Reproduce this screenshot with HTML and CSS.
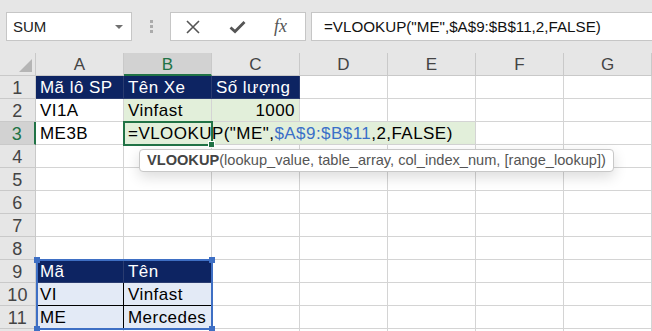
FILE: index.html
```html
<!DOCTYPE html>
<html lang="vi">
<head>
    <meta charset="UTF-8">
    <meta name="viewport" content="width=device-width, initial-scale=1.0">
    <title>VLOOKUP</title>
    <link rel="stylesheet" href="styles.css">
</head>
<body>
    <div class="app">
        <div class="toolbar">
            <div class="namebox"><span>SUM</span><span class="caret"></span></div>
            <div class="grip"><i></i><i></i><i></i></div>
            <div class="fxbox">
                <svg class="ico" width="14" height="14" viewBox="0 0 14 14"><path d="M1 1 L13 13 M13 1 L1 13" stroke="#555" stroke-width="1.6" fill="none"/></svg>
                <svg class="ico" width="17" height="14" viewBox="0 0 17 14"><path d="M1.5 7.5 L6 11.5 L15.5 2" stroke="#555" stroke-width="2.8" fill="none"/></svg>
                <span class="fx">fx</span>
            </div>
            <div class="formula">=VLOOKUP("ME",$A$9:$B$11,2,FALSE)</div>
        </div>

        <div class="sheet">
            <!-- column headers -->
            <div class="c h corner"><span class="tri"></span></div>
            <div class="c h">A</div>
            <div class="c h col-sel">B</div>
            <div class="c h">C</div>
            <div class="c h">D</div>
            <div class="c h">E</div>
            <div class="c h">F</div>
            <div class="c h">G</div>

            <!-- 1 -->
            <div class="c h rn">1</div>
            <div class="c navy">Mã lô SP</div>
            <div class="c navy">Tên Xe</div>
            <div class="c navy">Số lượng</div>
            <div class="c"></div><div class="c"></div><div class="c"></div><div class="c"></div>

            <!-- 2 -->
            <div class="c h rn">2</div>
            <div class="c">VI1A</div>
            <div class="c green">Vinfast</div>
            <div class="c green num">1000</div>
            <div class="c"></div><div class="c"></div><div class="c"></div><div class="c"></div>

            <!-- 3 -->
            <div class="c h rn row-sel">3</div>
            <div class="c">ME3B</div>
            <div class="c green editing">=VLOOKUP("ME",<span class="ref">$A$9:$B$11</span>,2,FALSE)</div>
            <div class="c"></div><div class="c"></div>

            <!-- 4 - 8 -->
            <div class="c h rn">4</div>
            <div class="c"></div><div class="c"></div><div class="c"></div><div class="c"></div><div class="c"></div><div class="c"></div><div class="c"></div>
            <div class="c h rn">5</div>
            <div class="c"></div><div class="c"></div><div class="c"></div><div class="c"></div><div class="c"></div><div class="c"></div><div class="c"></div>
            <div class="c h rn">6</div>
            <div class="c"></div><div class="c"></div><div class="c"></div><div class="c"></div><div class="c"></div><div class="c"></div><div class="c"></div>
            <div class="c h rn">7</div>
            <div class="c"></div><div class="c"></div><div class="c"></div><div class="c"></div><div class="c"></div><div class="c"></div><div class="c"></div>
            <div class="c h rn">8</div>
            <div class="c"></div><div class="c"></div><div class="c"></div><div class="c"></div><div class="c"></div><div class="c"></div><div class="c"></div>

            <!-- 9 - 11 lookup table -->
            <div class="c h rn">9</div>
            <div class="c navy">Mã</div>
            <div class="c navy">Tên</div>
            <div class="c"></div><div class="c"></div><div class="c"></div><div class="c"></div><div class="c"></div>
            <div class="c h rn">10</div>
            <div class="c blue line-r line-b">VI</div>
            <div class="c blue line-b">Vinfast</div>
            <div class="c"></div><div class="c"></div><div class="c"></div><div class="c"></div><div class="c"></div>
            <div class="c h rn">11</div>
            <div class="c blue line-r">ME</div>
            <div class="c blue">Mercedes</div>
            <div class="c"></div><div class="c"></div><div class="c"></div><div class="c"></div><div class="c"></div>

            <!-- 12 (only its top edge is in view) -->
            <div class="c h"></div>
            <div class="c"></div><div class="c"></div><div class="c"></div><div class="c"></div><div class="c"></div><div class="c"></div><div class="c"></div>

            <!-- selection overlays -->
            <div class="active"></div>
            <div class="range"><i class="tl"></i><i class="tr"></i><i class="bl"></i><i class="br"></i></div>
        </div>

        <div class="tip"><b>VLOOKUP</b>(lookup_value, table_array, col_index_num, [range_lookup])</div>
    </div>
</body>
</html>
```

FILE: styles.css
```css
body {
    margin: 0;
    font-family: "Liberation Sans", Arial, sans-serif;
    background-color: #fff;
}
.app {
    position: relative;
    width: 652px;
    height: 331px;
    overflow: hidden;
}

/* formula bar */
.toolbar {
    display: flex;
    align-items: flex-start;
    height: 53px;
    box-sizing: border-box;
    padding: 12px 0 0 6px;
    background-color: #e6e6e6;
}
.namebox {
    width: 126px;
    height: 29px;
    box-sizing: border-box;
    display: flex;
    align-items: center;
    justify-content: space-between;
    padding: 0 8px 0 6px;
    border: 1px solid #c6c6c6;
    background-color: #fff;
    font-size: 15px;
    color: #222;
}
.caret {
    border-left: 4px solid transparent;
    border-right: 4px solid transparent;
    border-top: 4px solid #707070;
}
.grip {
    display: flex;
    flex-direction: column;
    gap: 2px;
    margin: 8px 17px 0 18px;
}
.grip i {
    width: 3px;
    height: 3px;
    background-color: #ababab;
}
.fxbox {
    width: 136px;
    height: 29px;
    box-sizing: border-box;
    display: flex;
    align-items: center;
    padding-left: 15px;
    border: 1px solid #c6c6c6;
    background-color: #fff;
}
.fxbox .ico + .ico {
    margin-left: 29px;
}
.fx {
    margin-left: 28px;
    font-family: "Liberation Serif", "Times New Roman", serif;
    font-style: italic;
    font-size: 18px;
    color: #555;
}
.formula {
    flex: 1;
    height: 29px;
    box-sizing: border-box;
    margin-left: 5px;
    padding-left: 12px;
    border: 1px solid #c6c6c6;
    border-right: none;
    background-color: #fff;
    font-size: 15.2px;
    line-height: 27px;
    color: #111;
    white-space: nowrap;
}

/* sheet grid */
.sheet {
    position: relative;
    display: grid;
    grid-template-columns: 36px repeat(7, 88px);
    grid-auto-rows: 23px;
}
.c {
    box-sizing: border-box;
    padding: 2px 4px 0 4px;
    border-right: 1px solid #d4d4d4;
    border-bottom: 1px solid #d4d4d4;
    font-size: 17px;
    letter-spacing: 0.45px;
    line-height: 20px;
    color: #000;
    white-space: nowrap;
    overflow: hidden;
}
.h {
    padding: 2px 0 0 0;
    background-color: #e6e6e6;
    border-color: #c9c9c9;
    text-align: center;
    font-size: 17px;
    letter-spacing: 0;
    color: #444;
}
.rn {
    font-size: 18px;
    letter-spacing: 0.3px;
}
.corner {
    position: relative;
}
.tri {
    position: absolute;
    right: 3px;
    bottom: 3px;
    border-left: 13px solid transparent;
    border-bottom: 13px solid #b5b5b5;
}
.col-sel {
    background-color: #d2d2d2;
    color: #217346;
    border-bottom: 2px solid #217346;
}
.row-sel {
    background-color: #d2d2d2;
    color: #217346;
    border-right: 2px solid #217346;
}
.navy {
    background-color: #0d2462;
    border-color: #2a3c70;
    color: #fff;
}
.green {
    background-color: #e2efda;
}
.num {
    text-align: right;
}
.editing {
    grid-column: span 4;
}
.ref {
    color: #3b70c8;
}
.blue {
    background-color: #e3eaf6;
}
.line-r {
    border-right-color: #000;
}
.line-b {
    border-bottom-color: #000;
}

/* selection overlays */
.active {
    position: absolute;
    left: 123px;
    top: 68px;
    width: 90px;
    height: 25px;
    box-sizing: border-box;
    border: 2px solid #217346;
}
.active::after {
    content: "";
    position: absolute;
    right: -4px;
    bottom: -4px;
    width: 5px;
    height: 5px;
    background-color: #217346;
    border: 1px solid #fff;
}
.range {
    position: absolute;
    left: 36px;
    top: 206px;
    width: 177px;
    height: 71px;
    box-sizing: border-box;
    border: 2px solid #3e6fc4;
}
.range i {
    position: absolute;
    width: 6px;
    height: 6px;
    background-color: #3e6fc4;
}
.range .tl { left: -4px; top: -4px; }
.range .tr { right: -4px; top: -4px; }
.range .bl { left: -4px; bottom: -4px; }
.range .br { right: -4px; bottom: -4px; }

/* function hint */
.tip {
    position: absolute;
    left: 139px;
    top: 149px;
    height: 23px;
    box-sizing: border-box;
    padding: 0 7px;
    border: 1px solid #c8c8c8;
    border-radius: 4px;
    background-color: #fff;
    box-shadow: 0 5px 14px rgba(0, 0, 0, 0.14);
    font-size: 14.6px;
    line-height: 21px;
    color: #555;
    white-space: nowrap;
}
.tip b {
    color: #444;
}
```
